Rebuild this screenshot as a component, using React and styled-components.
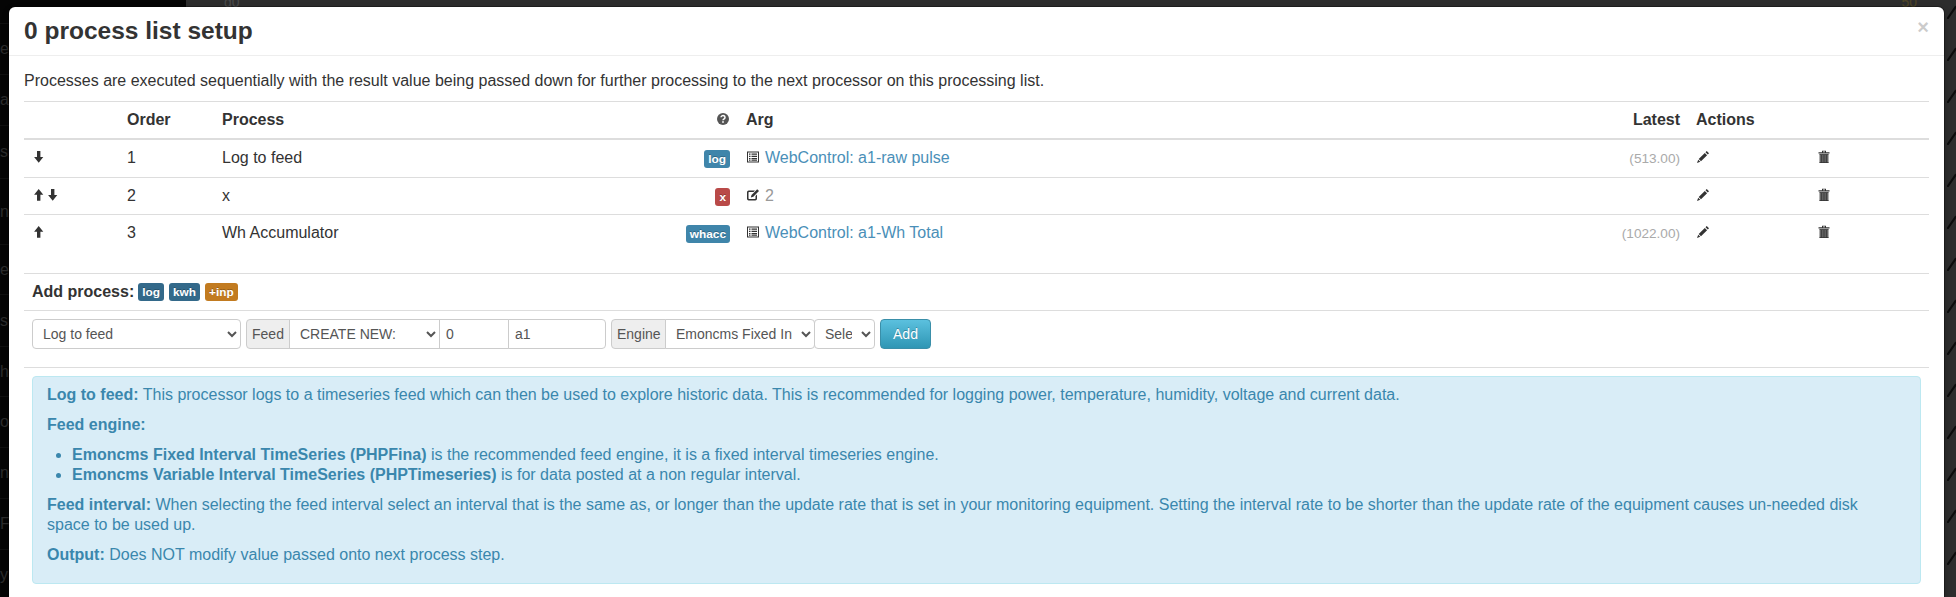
import React from 'react';
import styled, { createGlobalStyle } from 'styled-components';

const GlobalStyle = createGlobalStyle`
  html, body {
    margin: 0;
    height: 100%;
    overflow: hidden;
    background: #2d2d2d;
    font-family: "Liberation Sans", Arial, sans-serif;
    font-size: 16px;
    line-height: 20px;
    color: #333;
  }
`;

const Backdrop = styled.div`
  position: fixed;
  inset: 0;
  display: flex;
`;

const Sidebar = styled.div`
  width: 186px;
  background: #050505;
  display: flex;
  flex-direction: column;
  overflow: hidden;
`;

const SideRow = styled.div`
  flex: 0 0 ${props => props.$height || 51}px;
  display: flex;
  align-items: center;
  font-size: 16px;
  color: #2c2c2c;
  white-space: nowrap;
  border-bottom: 1px solid #101010;
  box-sizing: border-box;
`;

const Main = styled.div`
  flex: 1;
  display: flex;
  justify-content: flex-end;
  background: #2d2d2d;
  overflow: hidden;
`;

const TickColumn = styled.div`
  width: 9px;
  padding-top: 5px;
  display: flex;
  flex-direction: column;
  gap: 28px;
`;

const TopMarks = styled.div`
  flex: 1;
  display: flex;
  justify-content: space-between;
  height: 7px;
  padding: 0 30px 0 38px;
  font-size: 14px;
  line-height: 14px;
  overflow: hidden;
`;

const TopMark = styled.span`
  margin-top: -5px;
  color: ${props => props.$color || '#4a4a4a'};
`;

const Modal = styled.div`
  position: fixed;
  top: 7px;
  left: 9px;
  width: 1935px;
  bottom: -20px;
  background: #fff;
  border-radius: 6px;
  box-shadow: 0 0 0 1px rgba(0, 0, 0, 0.3), 0 3px 7px rgba(0, 0, 0, 0.3);
`;

const ModalHeader = styled.div`
  height: 49px;
  box-sizing: border-box;
  border-bottom: 1px solid #eee;
  padding: 0 15px;
  display: flex;
  align-items: center;
  justify-content: space-between;
`;

const Title = styled.h3`
  margin: 0;
  font-size: 24.5px;
  line-height: 40px;
  font-weight: bold;
  color: #333;
`;

const Close = styled.button`
  border: 0;
  padding: 0;
  background: none;
  margin-top: -8px;
  font-family: inherit;
  font-size: 20px;
  line-height: 20px;
  font-weight: bold;
  color: #000;
  opacity: 0.2;
  text-shadow: 0 1px 0 #fff;
`;

const ModalBody = styled.div`
  padding: 15px 15px 0;
`;

const Intro = styled.p`
  margin: 0;
  height: 30px;
`;

const ProcessTable = styled.table`
  width: 100%;
  table-layout: fixed;
  border-collapse: collapse;
  margin-bottom: 21px;
  border-top: 1px solid #ddd;
`;

const HeadCell = styled.th`
  padding: 8px;
  font-weight: bold;
  text-align: ${props => props.$align || 'left'};
  border-bottom: 2px solid #ddd;
`;

const Cell = styled.td`
  padding: 8px;
  text-align: ${props => props.$align || 'left'};
  border-top: ${props => (props.$first ? '0' : '1px solid #ddd')};
  vertical-align: top;
  white-space: nowrap;
`;

const Icon = styled.svg`
  display: inline-block;
  width: 14px;
  height: 14px;
  vertical-align: text-top;
  margin-top: 1px;
  fill: ${props => props.$color || '#333'};
`;

const Label = styled.span`
  display: inline-block;
  padding: 2px 4px;
  font-size: 11.844px;
  font-weight: bold;
  line-height: 14px;
  color: #fff;
  vertical-align: baseline;
  white-space: nowrap;
  border-radius: 3px;
  text-shadow: 0 -1px 0 rgba(0, 0, 0, 0.25);
  background: ${props => props.$bg};
`;

const FeedLink = styled.a`
  color: #4a8fb8;
  text-decoration: none;
  margin-left: 5px;
`;

const ArgValue = styled.span`
  color: #999;
  margin-left: 5px;
`;

const Latest = styled.span`
  font-size: 13.6px;
  color: #aaa;
`;

const AddRow = styled.div`
  border-top: 1px solid #ddd;
  padding: 8px;
  height: 37px;
  box-sizing: border-box;
  display: flex;
  align-items: center;
  gap: 5px;
`;

const AddTitle = styled.b`
  margin-right: -1px;
`;

const FormRow = styled.div`
  border-top: 1px solid #ddd;
  padding: 8px 8px 18px;
  display: flex;
  gap: 5px;
  font-size: 14px;
`;

const InputGroup = styled.div`
  display: flex;
`;

const Select = styled.select`
  width: ${props => props.$width}px;
  height: 30px;
  box-sizing: border-box;
  padding: 4px 6px;
  margin: 0 0 0 -1px;
  background: #fff;
  border: 1px solid #ccc;
  color: #555;
  font-family: inherit;
  font-size: 14px;
  border-radius: ${props => props.$radius || '0 4px 4px 0'};
  &:first-child { margin-left: 0; }
`;

const AddOn = styled.span`
  height: 30px;
  box-sizing: border-box;
  width: ${props => props.$width}px;
  padding: 4px 5px;
  background: #eee;
  border: 1px solid #ccc;
  color: #555;
  text-align: center;
  border-radius: 4px 0 0 4px;
`;

const TextInput = styled.input`
  width: ${props => props.$width}px;
  height: 30px;
  box-sizing: border-box;
  padding: 4px 6px;
  margin-left: -1px;
  border: 1px solid #ccc;
  color: #555;
  font-family: inherit;
  font-size: 14px;
  border-radius: ${props => props.$radius || '0'};
`;

const AddButton = styled.button`
  width: 51px;
  height: 30px;
  padding: 0;
  font-family: inherit;
  font-size: 14px;
  color: #fff;
  text-shadow: 0 -1px 0 rgba(0, 0, 0, 0.25);
  background: linear-gradient(to bottom, #5bc0de, #2f96b4);
  border: 1px solid #3a8fa9;
  border-radius: 4px;
`;

const AlertWrap = styled.div`
  border-top: 1px solid #ddd;
  padding: 8px;
`;

const Alert = styled.div`
  padding: 8px 35px 8px 14px;
  background: #d9edf7;
  border: 1px solid #bce8f1;
  border-radius: 4px;
  color: #3a87ad;
`;

const AlertText = styled.p`
  margin: 0 0 10px;
`;

const AlertList = styled.ul`
  margin: 0 0 10px 25px;
  padding: 0;
`;

const ArrowDown = () => (
  <Icon viewBox="0 0 14 14">
    <path d="M5 1h3.400v6H11.300L6.700 12.800 2.100 7H5z" />
  </Icon>
);

const ArrowUp = () => (
  <Icon viewBox="0 0 14 14">
    <path d="M5 12.800h3.400v-6H11.300L6.700 1 2.100 6.800H5z" />
  </Icon>
);

const HelpIcon = () => (
  <Icon viewBox="0 0 14 14" $color="#555">
    <circle cx="7" cy="7" r="6" />
    <path d="M5 5.300a2 1.800 0 1 1 3.200 1.500c-.8.500-1.200.7-1.200 1.400" fill="none" stroke="#fff" strokeWidth="1.500" />
    <rect x="6.200" y="9.200" width="1.600" height="1.600" fill="#fff" />
  </Icon>
);

const ListIcon = () => (
  <Icon viewBox="0 0 14 14">
    <path fillRule="evenodd" d="M1 1.500h12v11H1zM2 2.500v9h10v-9z" />
    <path d="M3 3.500h1.500v1.300H3zM5.500 3.500H11v1.300H5.500zM3 5.800h1.500v1.300H3zM5.500 5.800H11v1.300H5.500zM3 8h1.500v1.300H3zM5.500 8H11v1.300H5.500zM3 9.700h1.500v1H3zM5.500 9.700H11v1H5.500z" />
  </Icon>
);

const EditIcon = () => (
  <Icon viewBox="0 0 14 14">
    <path d="M3 2.500h6L7.500 4H3a.5.5 0 0 0-.5.5v6c0 .3.200.5.500.5h6c.3 0 .5-.2.500-.5V8L11 6.500v4.300A1.700 1.700 0 0 1 9.300 12.500H2.700A1.700 1.700 0 0 1 1 10.800V4.200A1.700 1.700 0 0 1 2.700 2.500z" />
    <path d="M11.200 1.200l1.800 1.800-5.700 5.700-2.500.7.700-2.500z" />
  </Icon>
);

const PencilIcon = () => (
  <Icon viewBox="0 0 14 14">
    <path d="M10.700 1l2.300 2.300-1.200 1.200-2.300-2.300zM8.800 2.900l2.300 2.300L5 11.300 2.700 9zM2.200 9.700l2.100 2.100L1 13z" />
  </Icon>
);

const TrashIcon = () => (
  <Icon viewBox="0 0 14 14">
    <path fillRule="evenodd" d="M5 .800h4V2.200h3.500v1.300h-11V2.200H5zM6 1.500v.7h2v-.7z" />
    <path d="M2.500 4.300h9V13h-9z" fill="#666" />
    <path d="M2.500 4.300h9v.8h-9zM2.500 12.200h9v.8h-9zM4.300 5h.8v7.300h-.8zM6.600 5h.8v7.300h-.8zM8.900 5h.8v7.300h-.8z" />
  </Icon>
);

const Tick = () => (
  <svg width="9" height="14" viewBox="0 0 9 14">
    <path d="M1 13L8.500 2" stroke="#0c0c0c" strokeWidth="2.200" strokeLinecap="round" fill="none" />
  </svg>
);

const sideRows = [
  { text: '', height: 24 },
  { text: 'e', height: 51 },
  { text: 'a', height: 51 },
  { text: 'su', height: 53 },
  { text: 'nc', height: 66 },
  { text: 'ev', height: 50 },
  { text: 's', height: 52 },
  { text: 'h', height: 50 },
  { text: 'oc', height: 51 },
  { text: 'n', height: 51 },
  { text: 'F', height: 51 },
  { text: 'y /', height: 51 },
];

const rows = [
  { order: 1, arrows: ['down'], name: 'Log to feed', tag: 'log', bg: '#3f85aa', kind: 'feed', arg: 'WebControl: a1-raw pulse', latest: '(513.00)' },
  { order: 2, arrows: ['up', 'down'], name: 'x', tag: 'x', bg: '#b94a48', kind: 'value', arg: '2', latest: '' },
  { order: 3, arrows: ['up'], name: 'Wh Accumulator', tag: 'whacc', bg: '#3f85aa', kind: 'feed', arg: 'WebControl: a1-Wh Total', latest: '(1022.00)' },
];

const columnWidths = [95, 95, 456, 68, 762, 188, 121, 120];

const App = () => (
  <>
    <GlobalStyle />
    <Backdrop>
      <Sidebar>
        {sideRows.map((row, i) => (
          <SideRow key={i} $height={row.height}>{row.text}</SideRow>
        ))}
      </Sidebar>
      <Main>
        <TopMarks>
          <TopMark>d0</TopMark>
          <TopMark $color="#4f4526">50</TopMark>
        </TopMarks>
        <TickColumn>
          {Array.from({ length: 14 }).map((_, i) => <Tick key={i} />)}
        </TickColumn>
      </Main>
    </Backdrop>

    <Modal>
      <ModalHeader>
        <Title>0 process list setup</Title>
        <Close>×</Close>
      </ModalHeader>
      <ModalBody>
        <Intro>Processes are executed sequentially with the result value being passed down for further processing to the next processor on this processing list.</Intro>
        <ProcessTable>
          <colgroup>
            {columnWidths.map((w, i) => <col key={i} width={w} />)}
          </colgroup>
          <thead>
            <tr>
              <HeadCell />
              <HeadCell>Order</HeadCell>
              <HeadCell>Process</HeadCell>
              <HeadCell $align="right"><HelpIcon /></HeadCell>
              <HeadCell>Arg</HeadCell>
              <HeadCell $align="right">Latest</HeadCell>
              <HeadCell>Actions</HeadCell>
              <HeadCell />
            </tr>
          </thead>
          <tbody>
            {rows.map((row, i) => (
              <tr key={row.order}>
                <Cell $first={i === 0}>
                  {row.arrows.map(a => (a === 'up' ? <ArrowUp key={a} /> : <ArrowDown key={a} />))}
                </Cell>
                <Cell $first={i === 0}>{row.order}</Cell>
                <Cell $first={i === 0}>{row.name}</Cell>
                <Cell $first={i === 0} $align="right"><Label $bg={row.bg}>{row.tag}</Label></Cell>
                <Cell $first={i === 0}>
                  {row.kind === 'feed' ? <ListIcon /> : <EditIcon />}
                  {row.kind === 'feed' ? <FeedLink href="#">{row.arg}</FeedLink> : <ArgValue>{row.arg}</ArgValue>}
                </Cell>
                <Cell $first={i === 0} $align="right"><Latest>{row.latest}</Latest></Cell>
                <Cell $first={i === 0}><PencilIcon /></Cell>
                <Cell $first={i === 0}><TrashIcon /></Cell>
              </tr>
            ))}
          </tbody>
        </ProcessTable>

        <AddRow>
          <AddTitle>Add process:</AddTitle>
          <Label $bg="#33698a">log</Label>
          <Label $bg="#33698a">kwh</Label>
          <Label $bg="#c27b20">+inp</Label>
        </AddRow>

        <FormRow>
          <Select $width={209} $radius="4px" defaultValue="log">
            <option value="log">Log to feed</option>
          </Select>
          <InputGroup>
            <AddOn $width={44}>Feed</AddOn>
            <Select $width={151} $radius="0" defaultValue="new">
              <option value="new">CREATE NEW:</option>
            </Select>
            <TextInput $width={70} defaultValue="0" />
            <TextInput $width={98} $radius="0 4px 4px 0" defaultValue="a1" />
          </InputGroup>
          <InputGroup>
            <AddOn $width={55}>Engine</AddOn>
            <Select $width={150} defaultValue="fixed">
              <option value="fixed">Emoncms Fixed Interval TimeSeries (PHPFina)</option>
            </Select>
            <Select $width={61} $radius="4px" defaultValue="sel">
              <option value="sel">Select interval</option>
            </Select>
          </InputGroup>
          <AddButton>Add</AddButton>
        </FormRow>

        <AlertWrap>
          <Alert>
            <AlertText><b>Log to feed:</b> This processor logs to a timeseries feed which can then be used to explore historic data. This is recommended for logging power, temperature, humidity, voltage and current data.</AlertText>
            <AlertText><b>Feed engine:</b></AlertText>
            <AlertList>
              <li><b>Emoncms Fixed Interval TimeSeries (PHPFina)</b> is the recommended feed engine, it is a fixed interval timeseries engine.</li>
              <li><b>Emoncms Variable Interval TimeSeries (PHPTimeseries)</b> is for data posted at a non regular interval.</li>
            </AlertList>
            <AlertText><b>Feed interval:</b> When selecting the feed interval select an interval that is the same as, or longer than the update rate that is set in your monitoring equipment. Setting the interval rate to be shorter than the update rate of the equipment causes un-needed disk space to be used up.</AlertText>
            <AlertText><b>Output:</b> Does NOT modify value passed onto next process step.</AlertText>
          </Alert>
        </AlertWrap>
      </ModalBody>
    </Modal>
  </>
);

export default App;
